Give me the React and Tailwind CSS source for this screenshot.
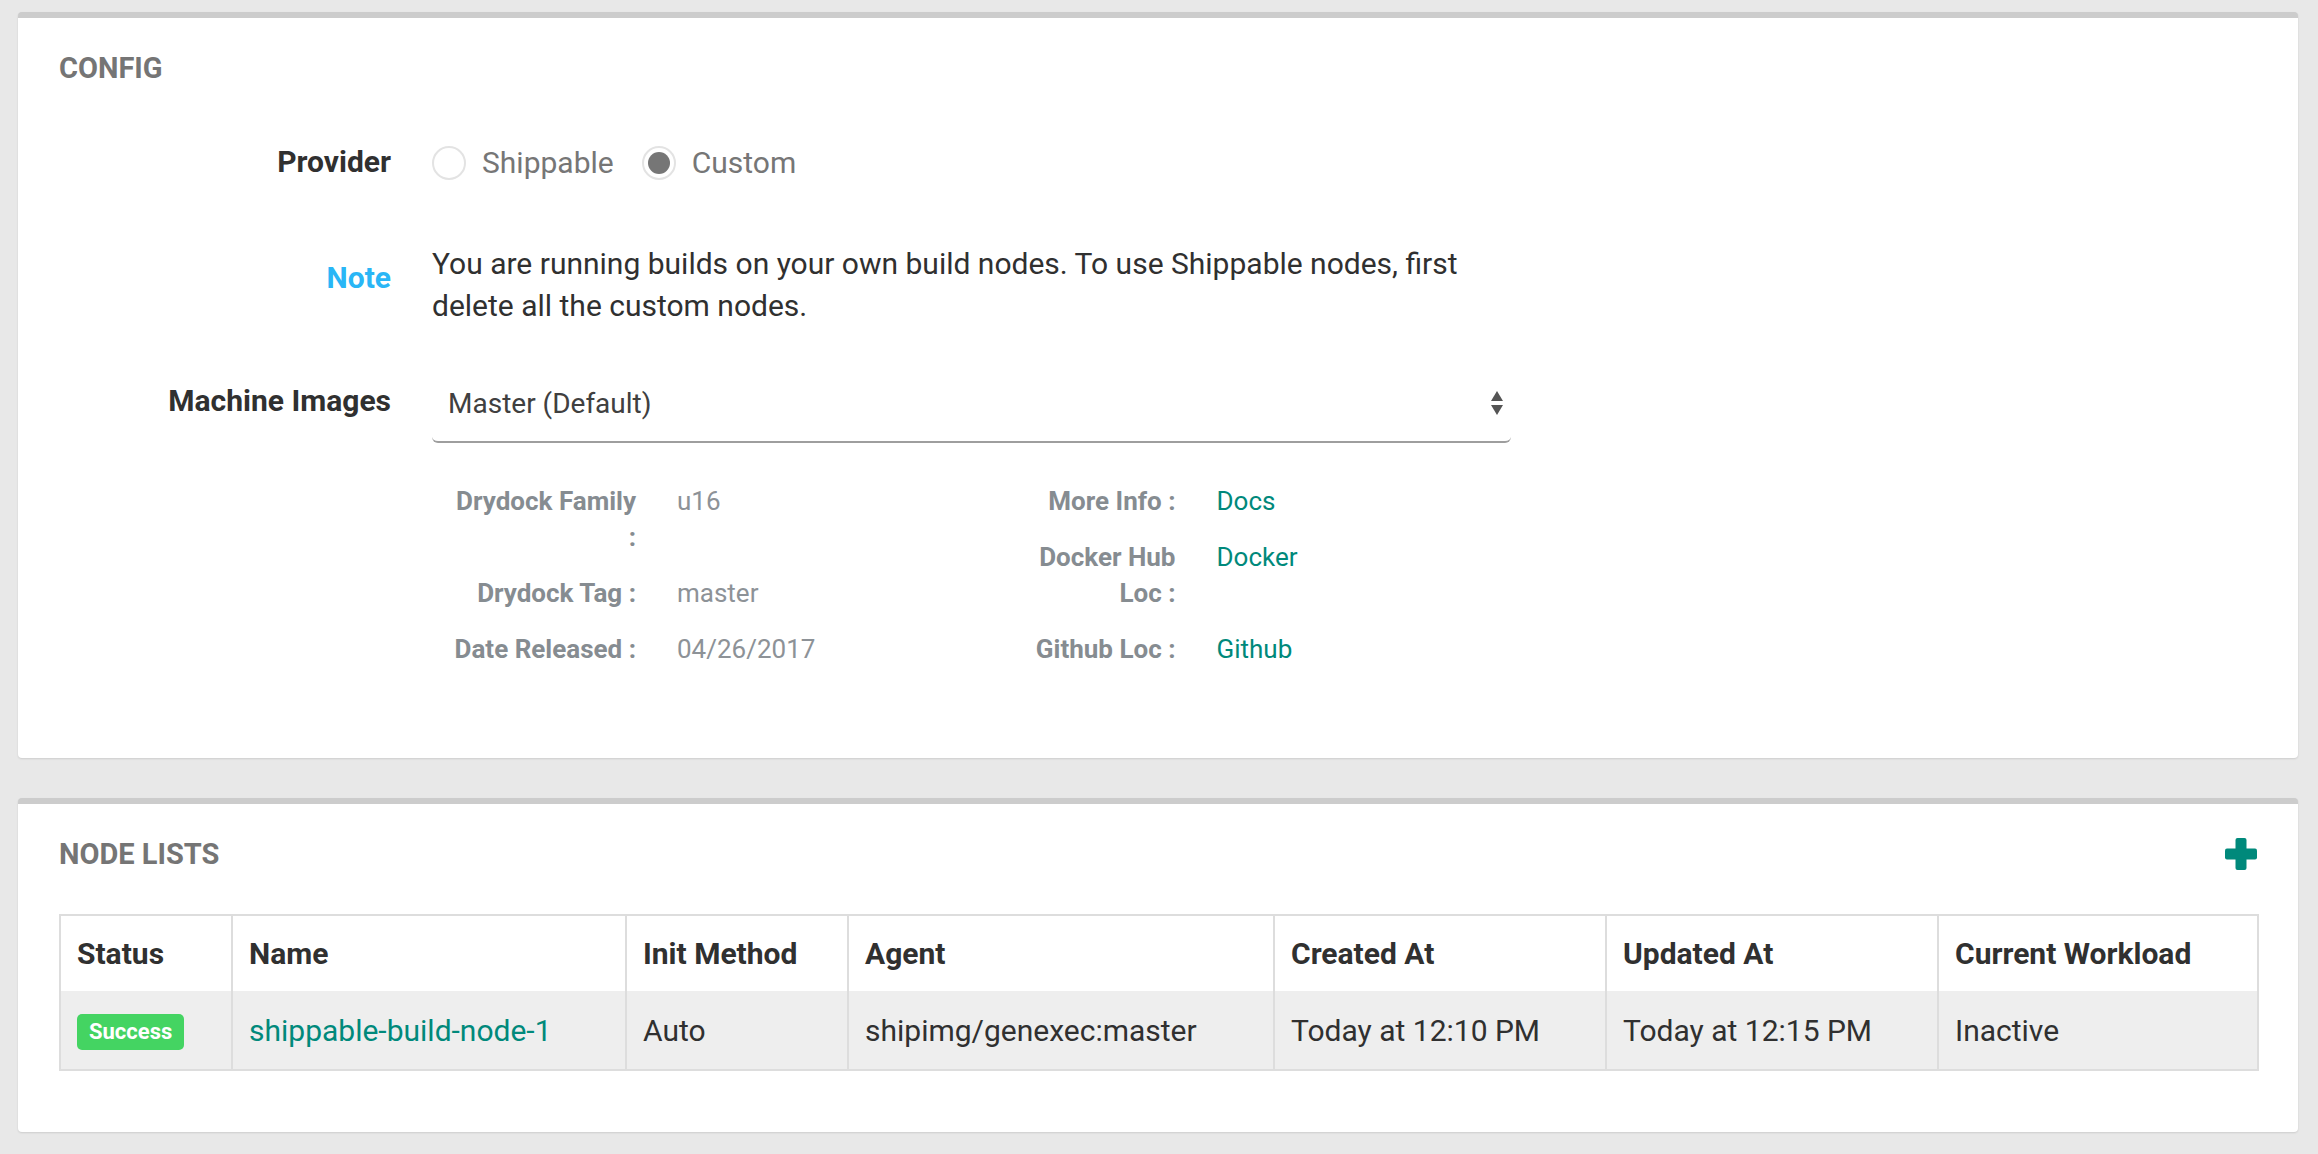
import React from 'react';

const Radio = ({ checked, label, className = '' }) => (
    <label className={`flex items-center ${className}`}>
        <span className="w-[34px] h-[34px] rounded-full border-2 border-[#e3e3e3] bg-white flex items-center justify-center shrink-0">
            {checked && <span className="w-[22px] h-[22px] rounded-full bg-[#767676]"></span>}
        </span>
        <span className="ml-[16px] text-[30px] leading-[42px] text-[#767676]">{label}</span>
    </label>
);

const FormRow = ({ label, labelColor = 'text-[#303030]', className = '', children }) => (
    <div className={`flex ${className}`}>
        <div className={`w-[332px] shrink-0 pt-[14px] text-right text-[30px] leading-[42px] font-bold ${labelColor}`}>
            {label}
        </div>
        <div className="ml-[41px] w-[1079px]">{children}</div>
    </div>
);

const Detail = ({ label, value, link }) => (
    <div className="flex mb-[20px] text-[26px] leading-[36px]">
        <div className="ml-[18px] w-[186px] shrink-0 text-right font-bold text-[#868c91]">{label}</div>
        <div className={`ml-[41px] ${link ? 'text-[#00897b]' : 'text-[#8d9297]'}`}>{value}</div>
    </div>
);

const SelectArrows = () => (
    <svg width="12" height="25" viewBox="0 0 12 25" className="fill-[#555555]">
        <polygon points="0,10 6,0 12,10" />
        <polygon points="0,14 12,14 6,24" />
    </svg>
);

const PlusIcon = () => (
    <svg width="32" height="32" viewBox="0 0 32 32" className="fill-[#00897b]">
        <rect x="10.5" y="0" width="11" height="32" rx="2" />
        <rect x="0" y="10.5" width="32" height="11" rx="2" />
    </svg>
);

const columns = ['Status', 'Name', 'Init Method', 'Agent', 'Created At', 'Updated At', 'Current Workload'];

const App = () => {
    return (
        <div className="min-h-screen bg-[#e8e8e8] pt-[12px] pb-[24px] pl-[18px] pr-[20px] [font-family:Roboto,sans-serif]">
            {/* config card */}
            <div className="bg-white rounded-[4px] border-t-[6px] border-[#cccccc] shadow-[0_1px_2px_rgba(0,0,0,0.12)] px-[41px] pt-[30px] pb-[71px]">
                <h2 className="text-[29px] leading-[40px] font-bold text-[#757575]">CONFIG</h2>

                <FormRow label="Provider" className="mt-[39px] h-[76px]">
                    <div className="flex pt-[15px]">
                        <Radio label="Shippable" />
                        <Radio label="Custom" checked className="ml-[28px]" />
                    </div>
                </FormRow>

                <FormRow label="Note" labelColor="text-[#29b6f6]" className="mt-[40px]">
                    <p className="text-[30px] leading-[42px] text-[#303030]">
                        You are running builds on your own build nodes. To use Shippable nodes, first delete all the custom nodes.
                    </p>
                </FormRow>

                <FormRow label="Machine Images" className="mt-[39px]">
                    <div className="h-[77px] border-b-2 border-[#9e9e9e] rounded-b-[6px] flex items-center justify-between pl-[16px] pr-[8px]">
                        <span className="text-[28px] text-[#404040]">Master (Default)</span>
                        <SelectArrows />
                    </div>
                    <div className="grid grid-cols-2 mt-[40px]">
                        <div>
                            <Detail label="Drydock Family :" value="u16" />
                            <Detail label="Drydock Tag :" value="master" />
                            <Detail label="Date Released :" value="04/26/2017" />
                        </div>
                        <div>
                            <Detail label="More Info :" value="Docs" link />
                            <Detail label={'Docker Hub Loc\u00a0:'} value="Docker" link />
                            <Detail label="Github Loc :" value="Github" link />
                        </div>
                    </div>
                </FormRow>
            </div>

            {/* node lists card */}
            <div className="mt-[40px] bg-white rounded-[4px] border-t-[6px] border-[#cccccc] shadow-[0_1px_2px_rgba(0,0,0,0.12)] px-[41px] pt-[30px] pb-[61px]">
                <div className="flex items-center justify-between">
                    <h2 className="text-[29px] leading-[40px] font-bold text-[#757575]">NODE LISTS</h2>
                    <PlusIcon />
                </div>

                <table className="mt-[40px] w-full table-fixed border-collapse">
                    <colgroup>
                        <col className="w-[172px]" />
                        <col className="w-[394px]" />
                        <col className="w-[222px]" />
                        <col className="w-[426px]" />
                        <col className="w-[332px]" />
                        <col className="w-[332px]" />
                        <col className="w-[320px]" />
                    </colgroup>
                    <thead>
                        <tr>
                            {columns.map((col) => (
                                <th
                                    key={col}
                                    className="h-[76px] px-[16px] border-x-2 border-t-2 border-[#dddddd] text-left align-middle text-[30px] font-bold text-[#303030]"
                                >
                                    {col}
                                </th>
                            ))}
                        </tr>
                    </thead>
                    <tbody>
                        <tr className="bg-[#eeeeee]">
                            <td className="h-[79px] px-[16px] border-x-2 border-b-2 border-[#dddddd] align-middle">
                                <span className="inline-block align-middle mt-[4px] bg-[#44d462] text-white font-bold text-[22px] leading-[36px] px-[12px] rounded-[5px]">
                                    Success
                                </span>
                            </td>
                            <td className="px-[16px] border-x-2 border-b-2 border-[#dddddd] align-middle text-[30px] text-[#00897b]">
                                shippable-build-node-1
                            </td>
                            <td className="px-[16px] border-x-2 border-b-2 border-[#dddddd] align-middle text-[30px] text-[#303030]">Auto</td>
                            <td className="px-[16px] border-x-2 border-b-2 border-[#dddddd] align-middle text-[30px] text-[#303030]">shipimg/genexec:master</td>
                            <td className="px-[16px] border-x-2 border-b-2 border-[#dddddd] align-middle text-[30px] text-[#303030]">Today at 12:10 PM</td>
                            <td className="px-[16px] border-x-2 border-b-2 border-[#dddddd] align-middle text-[30px] text-[#303030]">Today at 12:15 PM</td>
                            <td className="px-[16px] border-x-2 border-b-2 border-[#dddddd] align-middle text-[30px] text-[#303030]">Inactive</td>
                        </tr>
                    </tbody>
                </table>
            </div>
        </div>
    );
};

export default App;
